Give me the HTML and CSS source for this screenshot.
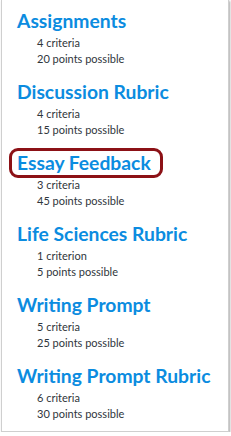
FILE: index.html
```html
<!DOCTYPE html>
<html lang="en">
<head>
    <meta charset="UTF-8">
    <title>Rubrics</title>
    <link rel="stylesheet" href="styles.css">
</head>
<body>
    <div class="panel">
        <ul class="rubric-list">
            <li class="rubric">
                <a class="rubric-title" href="#">Assignments</a>
                <div class="rubric-meta">4 criteria</div>
                <div class="rubric-meta">20 points possible</div>
            </li>
            <li class="rubric">
                <a class="rubric-title" href="#">Discussion Rubric</a>
                <div class="rubric-meta">4 criteria</div>
                <div class="rubric-meta">15 points possible</div>
            </li>
            <li class="rubric">
                <a class="rubric-title highlighted" href="#">Essay Feedback</a>
                <div class="rubric-meta">3 criteria</div>
                <div class="rubric-meta">45 points possible</div>
            </li>
            <li class="rubric">
                <a class="rubric-title" href="#">Life Sciences Rubric</a>
                <div class="rubric-meta">1 criterion</div>
                <div class="rubric-meta">5 points possible</div>
            </li>
            <li class="rubric">
                <a class="rubric-title" href="#">Writing Prompt</a>
                <div class="rubric-meta">5 criteria</div>
                <div class="rubric-meta">25 points possible</div>
            </li>
            <li class="rubric">
                <a class="rubric-title" href="#">Writing Prompt Rubric</a>
                <div class="rubric-meta">6 criteria</div>
                <div class="rubric-meta">30 points possible</div>
            </li>
        </ul>
    </div>
</body>
</html>
```
FILE: styles.css
```css
html, body {
    margin: 0;
    background-color: white;
}
body {
    font-family: Lato, "Open Sans", sans-serif;
}
.panel {
    width: 228px;
    height: 432px;
    margin-left: 1px;
    box-sizing: border-box;
    border: 1px solid #cfcfcf;
    border-top: none;
    box-shadow: 1px 1px 2px rgba(0, 0, 0, 0.35);
    overflow: hidden;
}
.rubric-list {
    list-style: none;
    margin: 0;
    padding: 9px 0 0 15px;
}
.rubric {
    margin-bottom: 13px;
}
.rubric-title {
    position: relative;
    display: inline-block;
    font-size: 19.3px;
    font-weight: bold;
    line-height: 24px;
    color: #0b8ce0;
    text-decoration: none;
}
.rubric-title.highlighted::after {
    content: "";
    position: absolute;
    left: -8px;
    right: -12px;
    top: -3px;
    bottom: -3px;
    border: 3px solid #8c1116;
    border-radius: 9px;
}
.rubric-meta {
    padding-left: 20px;
    font-size: 11px;
    line-height: 16px;
    color: #2f363c;
}
.rubric-title + .rubric-meta {
    margin-top: 2px;
}
```
